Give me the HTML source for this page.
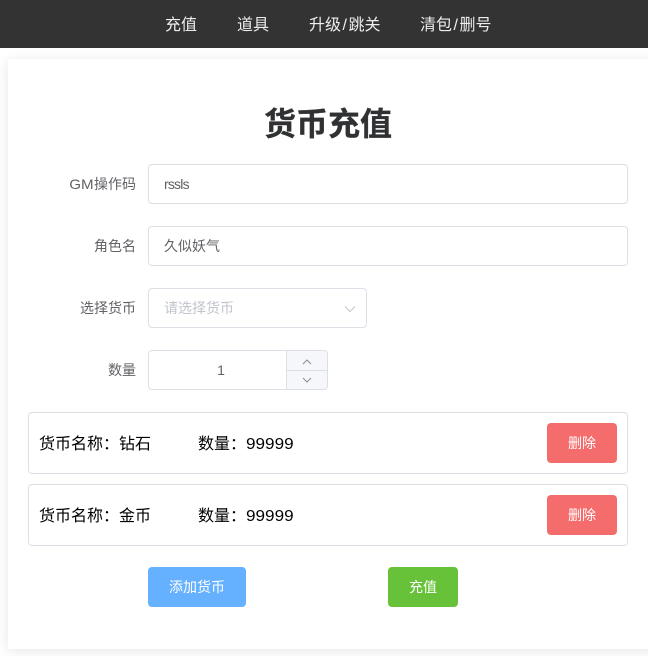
<!DOCTYPE html>
<html lang="zh">
<head>
<meta charset="utf-8">
<style>
html,body{margin:0;padding:0;width:648px;height:656px;overflow:hidden;background:#fff;font-family:"Liberation Sans","Noto Sans CJK SC",sans-serif;}
*{box-sizing:border-box}
.a{position:absolute}
.nav{left:0;top:0;width:648px;height:48px;background:#333}
.nav span{position:absolute;top:0;line-height:51px;font-size:16px;color:#eee;white-space:nowrap}
.nav i{font-style:normal;padding:0 1.5px}
.card{left:8px;top:59px;width:660px;height:590px;background:#fff;box-shadow:0 2px 12px rgba(0,0,0,.1)}
h1{position:absolute;margin:0;left:0;width:656px;top:101px;text-align:center;font-size:32px;line-height:46px;font-weight:700;color:#303133;-webkit-text-stroke:.3px #303133}
.lab{position:absolute;left:28px;width:108px;text-align:right;font-size:14px;line-height:40px;color:#606266;white-space:nowrap}
.inp{position:absolute;left:148px;height:40px;border:1px solid #dcdfe6;border-radius:4px;background:#fff;font-size:14px;line-height:38px;color:#606266;padding-left:15px;white-space:nowrap}
.row{position:absolute;left:28px;width:600px;height:62px;border:1px solid #dcdfe6;border-radius:4px}
.row span{position:absolute;top:0;line-height:64px;font-size:16px;color:#000;white-space:nowrap}
.row b{display:inline-block;font-weight:400;transform:scaleX(1.07);transform-origin:0 50%}
.gm{display:inline-block;transform:scaleX(1.08);transform-origin:100% 50%}
.btn{position:absolute;height:40px;border-radius:4px;color:#fff;font-size:14px;line-height:40px;text-align:center;white-space:nowrap}
</style>
</head>
<body>
<div class="a nav">
<span style="left:165px">充值</span>
<span style="left:237px">道具</span>
<span style="left:309px">升级<i>/</i>跳关</span>
<span style="left:420px">清包<i>/</i>删号</span>
</div>
<div class="a card"></div>
<h1>货币充值</h1>

<div class="lab" style="top:164px"><span class="gm">GM</span>操作码</div>
<div class="inp" style="top:164px;width:480px"><span style="letter-spacing:-.8px">rssls</span></div>

<div class="lab" style="top:226px">角色名</div>
<div class="inp" style="top:226px;width:480px">久似妖气</div>

<div class="lab" style="top:288px">选择货币</div>
<div class="inp" style="top:288px;width:219px;color:#c0c4cc">请选择货币</div>
<svg class="a" style="left:344px;top:303px" width="12" height="12" viewBox="0 0 12 12"><path d="M1 3.5L6 8.5L11 3.5" fill="none" stroke="#c0c4cc" stroke-width="1"/></svg>

<div class="lab" style="top:350px">数量</div>
<div class="inp" style="top:350px;width:180px;padding:0 34px 0 0;text-align:center">1</div>
<div class="a" style="left:286px;top:351px;width:41px;height:38px;background:#f5f7fa;border-left:1px solid #dcdfe6;border-radius:0 3px 3px 0"></div>
<div class="a" style="left:287px;top:370px;width:40px;height:1px;background:#dcdfe6"></div>
<svg class="a" style="left:302px;top:358px" width="10" height="8" viewBox="0 0 10 8"><path d="M1 6L5 2L9 6" fill="none" stroke="#8a8d93" stroke-width="1"/></svg>
<svg class="a" style="left:302px;top:376px" width="10" height="8" viewBox="0 0 10 8"><path d="M1 2L5 6L9 2" fill="none" stroke="#8a8d93" stroke-width="1"/></svg>

<div class="row" style="top:412px">
<span style="left:10px">货币名称：钻石</span>
<span style="left:169px">数量：<b>99999</b></span>
<div class="btn" style="left:518px;top:10px;width:70px;background:#f56c6c">删除</div>
</div>
<div class="row" style="top:484px">
<span style="left:10px">货币名称：金币</span>
<span style="left:169px">数量：<b>99999</b></span>
<div class="btn" style="left:518px;top:10px;width:70px;background:#f56c6c">删除</div>
</div>

<div class="btn" style="left:148px;top:567px;width:98px;background:#66b1ff">添加货币</div>
<div class="btn" style="left:388px;top:567px;width:70px;background:#67c23a">充值</div>
</body>
</html>
